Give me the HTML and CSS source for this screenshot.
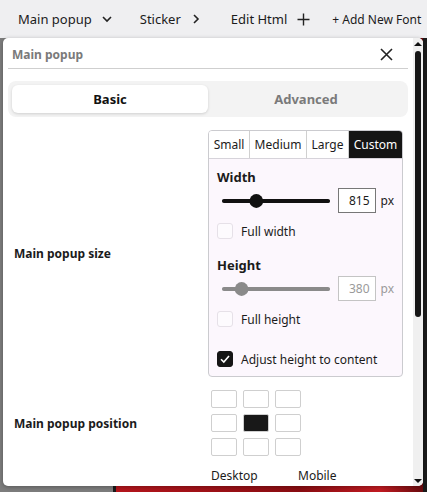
FILE: index.html
```html
<!DOCTYPE html>
<html lang="en">
<head>
    <meta charset="UTF-8">
    <title>Main popup</title>
    <link rel="stylesheet" href="styles.css">
</head>
<body>
    <div class="toolbar">
        <span class="tool tool-main">Main popup
            <svg width="10" height="10" viewBox="0 0 10 10"><path d="M1 3 L5 7 L9 3" fill="none" stroke="#222" stroke-width="1.6"/></svg>
        </span>
        <span class="tool tool-sticker">Sticker
            <svg width="10" height="10" viewBox="0 0 10 10"><path d="M3 1 L7 5 L3 9" fill="none" stroke="#222" stroke-width="1.6"/></svg>
        </span>
        <span class="tool tool-html">Edit Html
            <svg width="13" height="13" viewBox="0 0 13 13"><path d="M6.5 0.5 V12.5 M0.5 6.5 H12.5" fill="none" stroke="#222" stroke-width="1.4"/></svg>
        </span>
        <span class="tool tool-font">+ Add New Font</span>
    </div>

    <div class="stage">
        <div class="popup">
            <div class="popup-body">
                <div class="popup-header">
                    <span class="popup-title">Main popup</span>
                    <svg class="close" width="13" height="13" viewBox="0 0 13 13"><path d="M1 1 L12 12 M12 1 L1 12" fill="none" stroke="#222" stroke-width="1.6"/></svg>
                </div>

                <div class="tabs">
                    <div class="tab active">Basic</div>
                    <div class="tab">Advanced</div>
                </div>

                <div class="row">
                    <div class="row-label">Main popup size</div>
                    <div class="panel">
                        <div class="sizes">
                            <div class="size">Small</div>
                            <div class="size">Medium</div>
                            <div class="size">Large</div>
                            <div class="size selected">Custom</div>
                        </div>
                        <div class="panel-inner">
                            <div class="field-title">Width</div>
                            <div class="slider-row">
                                <svg class="slider" width="114" height="16" viewBox="0 0 114 16">
                                    <line x1="6" y1="8" x2="112" y2="8" stroke="#111" stroke-width="4" stroke-linecap="round"/>
                                    <circle cx="39" cy="8" r="7" fill="#111"/>
                                </svg>
                                <div class="num">815</div>
                                <span class="unit">px</span>
                            </div>
                            <div class="check-row">
                                <span class="box"></span>
                                <span>Full width</span>
                            </div>

                            <div class="field-title second">Height</div>
                            <div class="slider-row disabled">
                                <svg class="slider" width="114" height="16" viewBox="0 0 114 16">
                                    <line x1="6" y1="8" x2="112" y2="8" stroke="#8a8a8a" stroke-width="4" stroke-linecap="round"/>
                                    <circle cx="24" cy="8" r="7" fill="#8a8a8a"/>
                                </svg>
                                <div class="num">380</div>
                                <span class="unit">px</span>
                            </div>
                            <div class="check-row">
                                <span class="box"></span>
                                <span>Full height</span>
                            </div>
                            <div class="check-row adjust">
                                <span class="box checked">
                                    <svg width="12" height="12" viewBox="0 0 12 12"><path d="M2 6.2 L4.8 9 L10 3" fill="none" stroke="#fff" stroke-width="1.6"/></svg>
                                </span>
                                <span>Adjust height to content</span>
                            </div>
                        </div>
                    </div>
                </div>

                <div class="row position-row">
                    <div class="row-label">Main popup position</div>
                    <div class="pos-grid">
                        <span class="cell"></span><span class="cell"></span><span class="cell"></span>
                        <span class="cell"></span><span class="cell on"></span><span class="cell"></span>
                        <span class="cell"></span><span class="cell"></span><span class="cell"></span>
                    </div>
                </div>
                <div class="devices">
                    <span class="device">Desktop</span>
                    <span class="device">Mobile</span>
                </div>
            </div>

            <div class="scrollbar">
                <span class="arrow up"></span>
                <span class="thumb"></span>
                <span class="arrow down"></span>
            </div>
        </div>
    </div>
</body>
</html>
```

FILE: styles.css
```css
body {
    margin: 0;
    width: 427px;
    height: 492px;
    overflow: hidden;
    font-family: "Noto Sans", "Open Sans", sans-serif;
    color: #1b1b1b;
    background: #7d7d7d;
}

.toolbar {
    height: 38px;
    background: #efeff1;
    display: flex;
    align-items: center;
    font-size: 13px;
    white-space: nowrap;
}

.tool {
    display: flex;
    align-items: center;
    gap: 10px;
}

.tool-main {
    margin-left: 18px;
}

.tool-sticker {
    margin-left: 28px;
}

.tool-html {
    margin-left: 30px;
}

.tool-font {
    margin-left: 22px;
    font-size: 12px;
}

.stage {
    height: 454px;
    background: linear-gradient(to right, #7d7d7d 113px, #1a1a1a 113px, #1a1a1a 116px, #b5161d 116px, #8a0d12 300px, #c21b22 380px, #6a0b0e 423px, #1a1a1a 423px);
}

.popup {
    margin-left: 3px;
    width: 420px;
    height: 448px;
    background: #fff;
    border-radius: 5px;
    box-shadow: 0 1px 4px rgba(0, 0, 0, 0.3);
    display: flex;
    overflow: hidden;
}

.popup-body {
    flex: 1;
    padding: 0 5px 0 5px;
}

.popup-header {
    height: 30px;
    border-bottom: 1px solid #cfcfcf;
    display: flex;
    align-items: center;
    justify-content: space-between;
    padding: 0 0 0 4px;
}

.popup-title {
    font-size: 12px;
    font-weight: bold;
    color: #7a7a7a;
    margin-top: 3px;
}

.close {
    margin-right: 15px;
    margin-top: 3px;
}

.tabs {
    margin-top: 12px;
    height: 36px;
    box-sizing: border-box;
    padding: 4px;
    background: #f3f3f3;
    border-radius: 8px;
    display: flex;
}

.tab {
    flex: 1;
    display: flex;
    align-items: center;
    justify-content: center;
    font-size: 13px;
    font-weight: bold;
    color: #7a7a7a;
    border-radius: 6px;
}

.tab.active {
    background: #fff;
    color: #111;
    box-shadow: 0 1px 3px rgba(0, 0, 0, 0.15);
}

.row {
    display: grid;
    grid-template-columns: 200px 195px;
    align-items: center;
    margin-top: 13px;
}

.row-label {
    font-size: 12px;
    font-weight: bold;
    padding-left: 6px;
}

.panel {
    background: #fcf7fd;
    border: 1px solid #cbcbcf;
    border-radius: 4px;
    overflow: hidden;
}

.sizes {
    display: flex;
    height: 27px;
    border-bottom: 1px solid #d6d3da;
    font-size: 12px;
}

.size {
    display: flex;
    align-items: center;
    justify-content: center;
    border-right: 1px solid #d0d0d0;
    background: #fff;
}

.size:nth-child(1) { width: 40px; }
.size:nth-child(2) { width: 56px; }
.size:nth-child(3) { width: 41px; }

.size.selected {
    flex: 1;
    border-right: none;
    background: #151515;
    color: #fff;
}

.panel-inner {
    padding: 9px 8px 9px 8px;
}

.field-title {
    font-size: 13px;
    font-weight: bold;
    line-height: 18px;
}

.field-title.second {
    margin-top: 17px;
}

.slider-row {
    display: flex;
    align-items: center;
    margin-top: 2px;
    height: 25px;
}

.slider {
    margin-left: 1px;
}

.num {
    margin-left: 8px;
    width: 38px;
    height: 25px;
    box-sizing: border-box;
    border: 1px solid #777;
    background: #fff;
    font-size: 12px;
    text-align: right;
    padding-right: 5px;
    line-height: 23px;
}

.unit {
    margin-left: 5px;
    font-size: 12px;
}

.disabled .num {
    border-color: #c4c4c4;
    color: #9a9a9a;
}

.disabled .unit {
    color: #9a9a9a;
}

.check-row {
    display: flex;
    align-items: center;
    gap: 8px;
    margin-top: 10px;
    height: 16px;
    font-size: 12px;
}

.check-row.adjust {
    margin-top: 24px;
}

.box {
    width: 16px;
    height: 16px;
    box-sizing: border-box;
    border: 1px solid #e6e1e8;
    border-radius: 3px;
    background: #fdfbfe;
    display: flex;
    align-items: center;
    justify-content: center;
}

.box.checked {
    background: #151515;
    border-color: #151515;
}

.position-row {
    margin-top: 13px;
}

.pos-grid {
    margin-left: 3px;
    display: grid;
    grid-template-columns: repeat(3, 26px);
    grid-auto-rows: 18px;
    column-gap: 6px;
    row-gap: 6px;
}

.cell {
    border: 1px solid #cfcfcf;
    border-radius: 2px;
}

.cell.on {
    background: #181818;
}

.devices {
    display: flex;
    margin: 11px 0 0 203px;
    font-size: 12px;
}

.device {
    width: 87px;
}

.scrollbar {
    width: 10px;
    background: #f0f0f0;
    display: flex;
    flex-direction: column;
    align-items: center;
    padding: 4px 0 3px;
    box-sizing: border-box;
}

.arrow {
    width: 0;
    height: 0;
    border-left: 4px solid transparent;
    border-right: 4px solid transparent;
}

.arrow.up {
    border-bottom: 4px solid #111;
}

.arrow.down {
    border-top: 4px solid #111;
    margin-top: auto;
}

.thumb {
    margin-top: 5px;
    width: 6px;
    height: 266px;
    background: #161616;
    border-radius: 3px;
}
```
